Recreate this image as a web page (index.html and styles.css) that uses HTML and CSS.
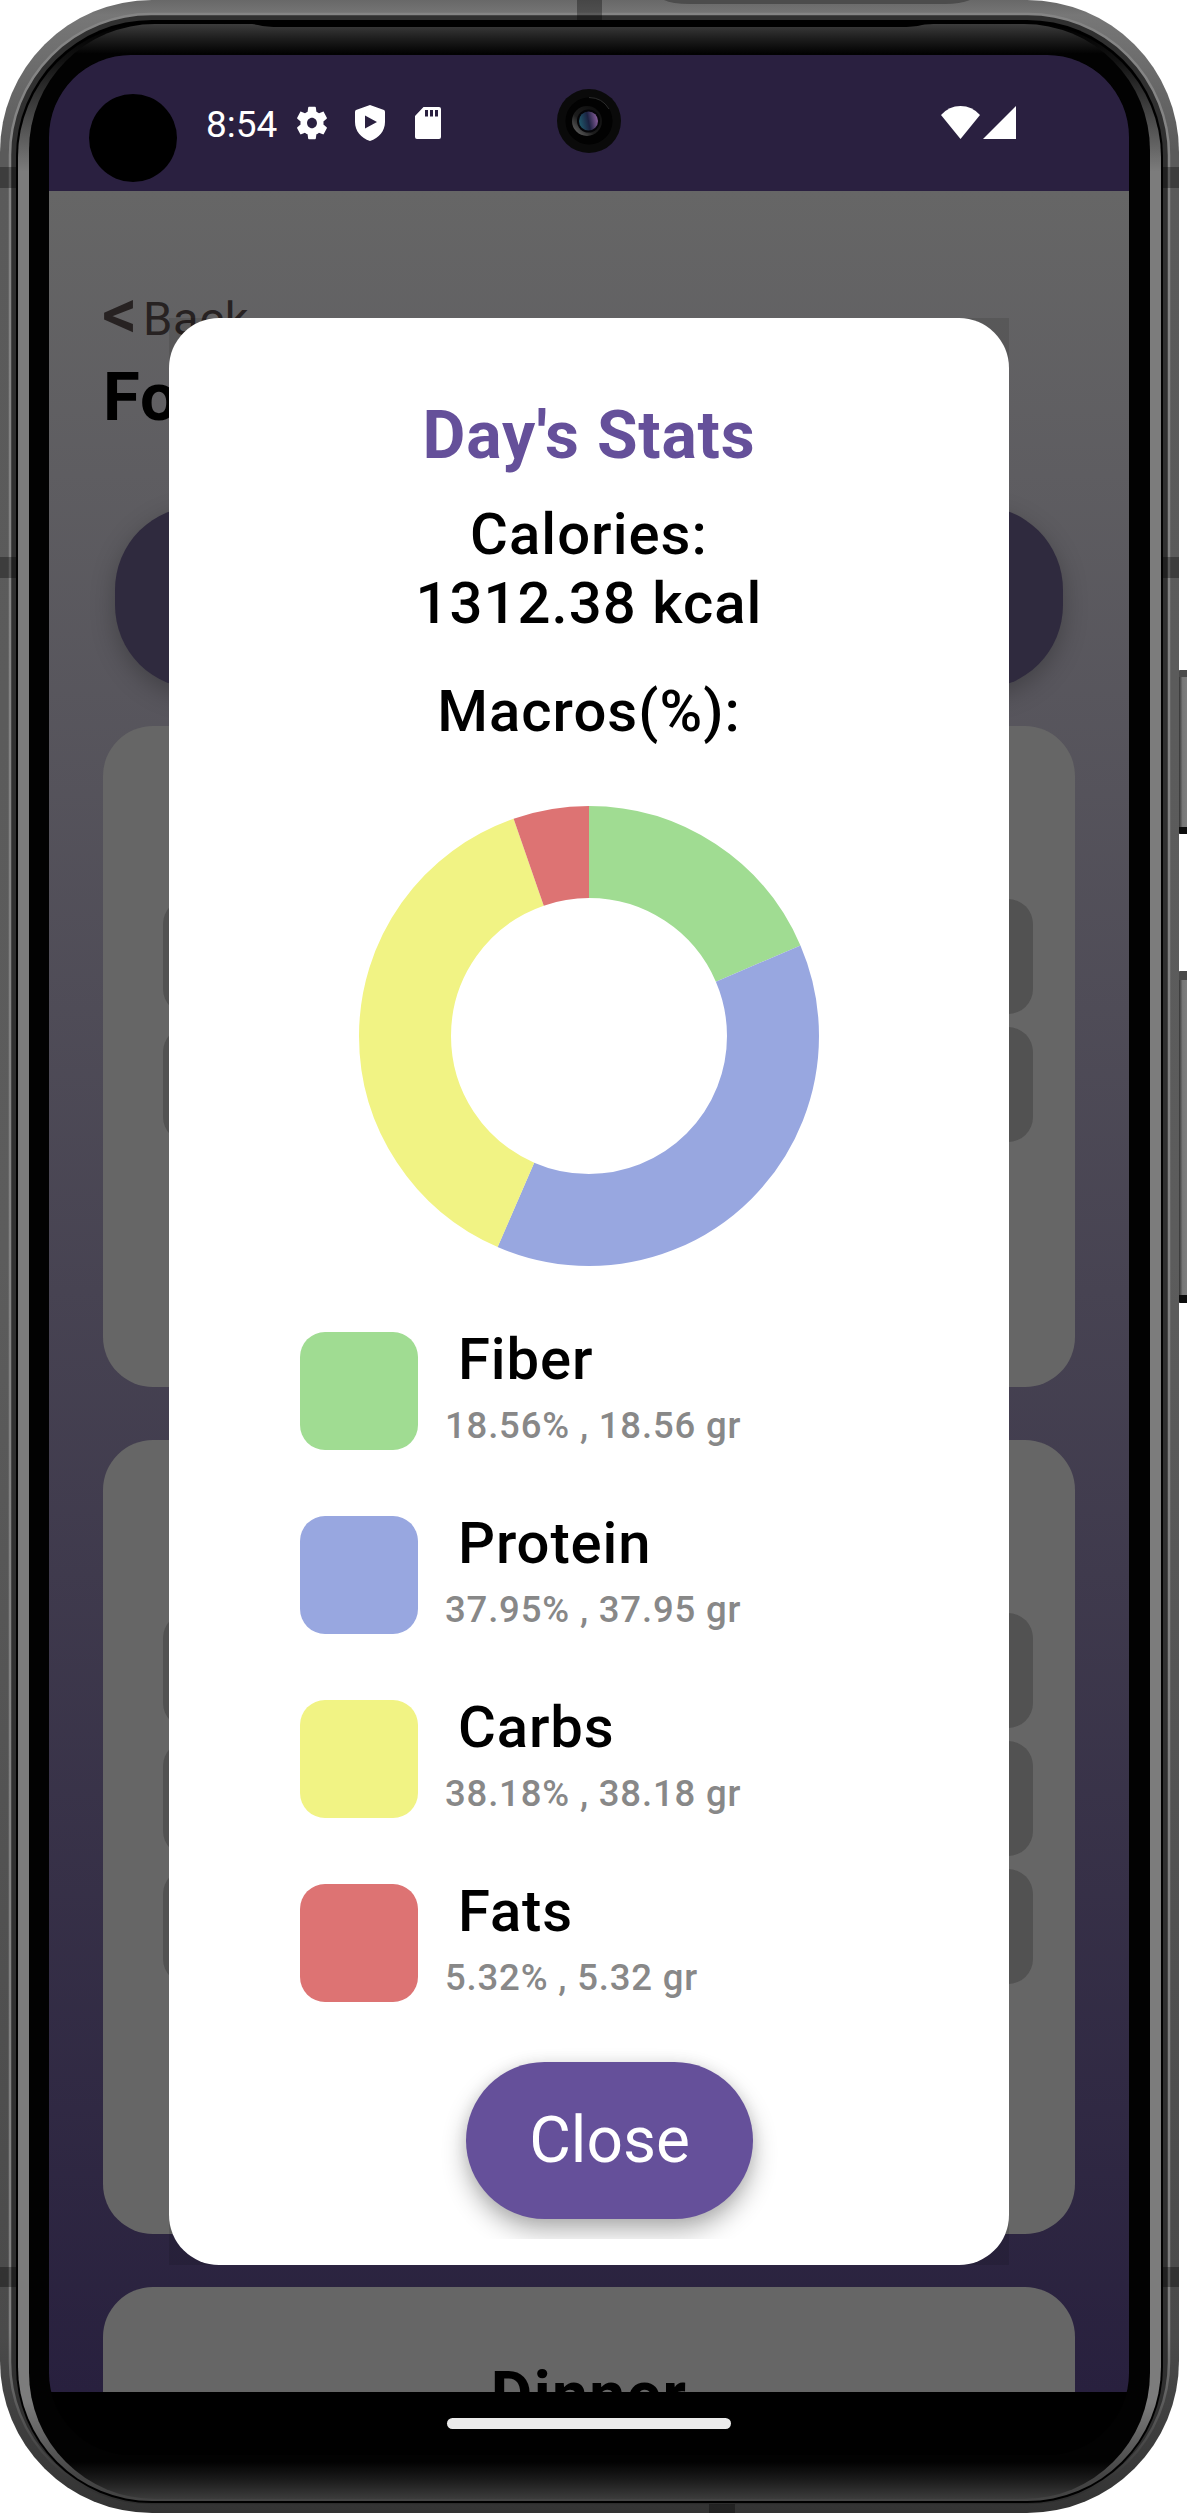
FILE: index.html
```html
<!DOCTYPE html>
<html lang="en">
<head>
<meta charset="utf-8">
<title>Day's Stats</title>
<link rel="stylesheet" href="styles.css">
</head>
<body>
<div class="device">
  <svg class="frame" width="1187" height="2513" viewBox="0 0 1187 2513" aria-hidden="true">
    <defs>
      <linearGradient id="rim" x1="0" y1="0" x2="0" y2="1">
        <stop offset="0" stop-color="#686868"/><stop offset=".006" stop-color="#777"/><stop offset=".06" stop-color="#5a5a5a"/><stop offset=".5" stop-color="#5c5c5c"/><stop offset=".93" stop-color="#4a4a4a"/><stop offset="1" stop-color="#333"/>
      </linearGradient>
      <linearGradient id="shine" x1="0" y1="0" x2="0" y2="1">
        <stop offset="0" stop-color="#858585"/><stop offset=".93" stop-color="#808080"/><stop offset="1" stop-color="#2c2c2c"/>
      </linearGradient>
      <linearGradient id="lip" x1="0" y1="0" x2="0" y2="1">
        <stop offset="0" stop-color="#000"/><stop offset=".015" stop-color="#111"/><stop offset=".06" stop-color="#7c7c7c"/><stop offset=".96" stop-color="#7c7c7c"/><stop offset=".99" stop-color="#444"/><stop offset="1" stop-color="#444"/>
      </linearGradient>
      <linearGradient id="glass" x1="0" y1="0" x2="0" y2="1">
        <stop offset="0" stop-color="#3c3c3c"/><stop offset=".006" stop-color="#1d1d1d"/><stop offset=".012" stop-color="#020202"/><stop offset=".985" stop-color="#020202"/><stop offset=".992" stop-color="#1a1a1a"/><stop offset="1" stop-color="#3c3c3c"/>
      </linearGradient>
      <linearGradient id="key" x1="0" y1="0" x2="1" y2="0">
        <stop offset="0" stop-color="#333"/><stop offset=".3" stop-color="#777"/><stop offset="1" stop-color="#848484"/>
      </linearGradient>
    </defs>
    <g>
      <rect x="1178" y="670" width="12" height="20" rx="2" fill="#4a4a4a"/>
      <rect x="1178" y="818" width="12" height="16" rx="2" fill="#0c0c0c"/>
      <rect x="1179" y="677" width="12" height="150" fill="url(#key)"/>
      <rect x="1178" y="971" width="12" height="20" rx="2" fill="#4a4a4a"/>
      <rect x="1178" y="1287" width="12" height="16" rx="2" fill="#0c0c0c"/>
      <rect x="1179" y="980" width="12" height="315" fill="url(#key)"/>
    </g>
    <rect x="0" y="0" width="1179" height="2513" rx="152" fill="url(#rim)"/>
    <rect x="10" y="14" width="1159" height="2489" rx="141" fill="#303030" stroke="url(#shine)" stroke-width="2.500"/>
    <rect x="16" y="20" width="1147" height="2483" rx="136" fill="#000"/>
    <rect x="18" y="23" width="1143" height="2478" rx="134" fill="url(#lip)"/>
    <rect x="29" y="24" width="1121" height="2475" rx="126" fill="url(#glass)"/>
    <path d="M160 21H1020L1000 23Q930 23 922 25T900 27H280Q266 27 258 25T240 23Z" fill="#000"/>
    <g fill="#000" fill-opacity=".32">
      <rect x="577" y="0" width="25" height="20"/>
      <rect x="0" y="167" width="16" height="21"/><rect x="1163" y="167" width="16" height="21"/>
      <rect x="0" y="557" width="16" height="21"/><rect x="1163" y="557" width="16" height="21"/>
      <rect x="0" y="2267" width="16" height="20"/><rect x="1163" y="2267" width="16" height="20"/>
      <rect x="709" y="2504" width="26" height="9"/>
    </g>
    <path d="M664 0H1025V0H970Q960 4 945 4H690Q672 4 664 0Z" fill="#4c4c4c"/>
  </svg>

  <main class="screen">
    <header class="status">
      <span class="clock">8:54</span>
      <svg class="gear" viewBox="2 2 20 20" preserveAspectRatio="none"><path fill="#fff" fill-rule="evenodd" d="M19.14 12.94c.04-.3.06-.61.06-.94 0-.32-.02-.64-.07-.94l2.03-1.58c.18-.14.23-.41.12-.61l-1.92-3.32c-.12-.22-.37-.29-.59-.22l-2.39.96c-.5-.38-1.03-.7-1.62-.94l-.36-2.54c-.04-.24-.24-.41-.48-.41h-3.84c-.24 0-.43.17-.47.41l-.36 2.54c-.59.24-1.13.57-1.62.94l-2.39-.96c-.22-.08-.47 0-.59.22L2.74 8.87c-.12.21-.08.47.12.61l2.03 1.58c-.05.3-.09.63-.09.94s.02.64.07.94l-2.03 1.58c-.18.14-.23.41-.12.61l1.92 3.32c.12.22.37.29.59.22l2.39-.96c.5.38 1.03.7 1.62.94l.36 2.54c.05.24.24.41.48.41h3.84c.24 0 .44-.17.47-.41l.36-2.54c.59-.24 1.13-.56 1.62-.94l2.39.96c.22.08.47 0 .59-.22l1.92-3.32c.12-.22.07-.47-.12-.61l-2.01-1.58zM12 15.100c-1.700 0-3.100-1.400-3.100-3.100s1.400-3.100 3.100-3.100 3.100 1.400 3.100 3.100-1.400 3.100-3.100 3.100z"/></svg>
      <svg class="shield" viewBox="0 0 30 36"><path fill="#fff" fill-rule="evenodd" d="M15 0L29 5Q30 5.500 30 7V17C30 26 24 33 15 36C6 33 0 26 0 17V7Q0 5.500 1 5ZM10 10.500V23.500L22 17Z"/></svg>
      <svg class="card-icon" viewBox="0 0 26 32"><path fill="#fff" fill-rule="evenodd" d="M8.500 0H24Q26 0 26 2V30Q26 32 24 32H2Q0 32 0 30V9ZM10 3V9.500H13V3ZM15 3V9.500H18V3ZM20 3V9.500H23V3Z"/></svg>
      <svg class="wifi" viewBox="0 0 39 33"><path fill="#fff" d="M0 9Q8 0 19.500 0T39 9L19.500 33Z"/></svg>
      <svg class="signal" viewBox="0 0 33 33"><path fill="#fff" d="M33 0V33H0Z"/></svg>
      <i class="cutout"></i>
      <svg class="lens" viewBox="0 0 64 64">
        <defs>
          <linearGradient id="ring" x1="0" y1="1" x2="1" y2="0"><stop offset="0" stop-color="#777"/><stop offset=".4" stop-color="#1c1c1c"/><stop offset="1" stop-color="#0a0a0a"/></linearGradient>
          <linearGradient id="iris" x1="0" y1=".6" x2="1" y2=".4"><stop offset="0" stop-color="#1f5a6c"/><stop offset=".5" stop-color="#1b2140"/><stop offset="1" stop-color="#8a5f9c"/></linearGradient>
        </defs>
        <circle cx="32" cy="32" r="32" fill="#0a0a0a"/>
        <circle cx="32" cy="32" r="23.500" fill="#020202"/>
        <path d="M32 8.500A23.500 23.500 0 0 1 52 20" fill="none" stroke="#2c2c2c"/>
        <circle cx="30" cy="32" r="15" fill="url(#ring)"/>
        <circle cx="31.500" cy="32" r="11.500" fill="#050508"/>
        <circle cx="31.500" cy="32" r="9.500" fill="url(#iris)"/>
      </svg>
    </header>

    <section class="page">
      <a class="back"><span class="chevron">&lt;</span>Back</a>
      <h1 class="heading">Food</h1>
      <div class="banner"></div>
      <div class="meal"><i></i><i></i></div>
      <div class="meal tall"><i></i><i></i><i></i></div>
      <div class="meal last"><h2>Dinner</h2></div>
    </section>

    <footer class="nav"><span></span></footer>
  </main>

  <section class="dialog-box">
  <div class="dialog">
    <h2 class="title">Day's Stats</h2>
    <p class="calories">Calories:<br>1312.38 kcal</p>
    <p class="macros">Macros(%):</p>
    <svg class="donut" viewBox="-230 -230 460 460">
      <g fill="none" stroke-width="92" transform="rotate(-90)">
        <circle r="184" pathLength="100" stroke="#a0dc92" stroke-dasharray="18.56 81.44"/>
        <circle r="184" pathLength="100" stroke="#98a7e0" stroke-dasharray="37.95 62.05" stroke-dashoffset="-18.56"/>
        <circle r="184" pathLength="100" stroke="#f1f384" stroke-dasharray="38.18 61.82" stroke-dashoffset="-56.5"/>
        <circle r="184" pathLength="100" stroke="#dd7373" stroke-dasharray="5.32 94.68" stroke-dashoffset="-94.68"/>
      </g>
    </svg>
    <ul class="legend">
      <li><i class="fiber"></i><div><b>Fiber</b><span>18.56% , 18.56 gr</span></div></li>
      <li><i class="protein"></i><div><b>Protein</b><span>37.95% , 37.95 gr</span></div></li>
      <li><i class="carbs"></i><div><b>Carbs</b><span>38.18% , 38.18 gr</span></div></li>
      <li><i class="fats"></i><div><b>Fats</b><span>5.32% , 5.32 gr</span></div></li>
    </ul>
    <div class="actions"><button class="close">Close</button></div>
  </div>
  </section>
</div>
</body>
</html>
```
FILE: styles.css
```css
* { box-sizing: border-box; margin: 0; padding: 0; }
body { background: #fff; font-family: Roboto, "Liberation Sans", sans-serif; color: #000; }
.device { position: relative; width: 1187px; height: 2513px; overflow: hidden; padding: 55px 58px 58px 49px; }
.frame { position: absolute; inset: 0; }
.screen { position: relative; width: 1080px; height: 2400px; border-radius: 82px; overflow: hidden; background: #000; display: flex; flex-direction: column; }

/* status bar */
.status { position: relative; height: 136px; flex: none; background: #2a2040; display: flex; align-items: flex-start; padding: 50px 113px 0 157px; }
.clock { color: #fff; font-size: 37px; line-height: 44px; width: 90px; margin-top: -2px; }
.gear { width: 32px; height: 34px; margin-top: 1px; }
.shield { width: 30px; height: 36px; margin-left: 27px; }
.card-icon { width: 26px; height: 32px; margin: 2px 0 0 30px; }
.wifi { width: 39px; height: 33px; margin: 1px 3px 0 auto; }
.signal { width: 33px; height: 33px; margin-top: 1px; }
.cutout { position: absolute; left: 40px; top: 39px; width: 88px; height: 88px; border-radius: 50%; background: #000; }
.lens { position: absolute; left: 508px; top: 34px; width: 64px; height: 64px; }

/* dimmed page */
.page { height: 2201px; flex: none; overflow: hidden; padding: 0 54px; background: linear-gradient(#666, #28203e); display: flex; flex-direction: column; }
.back { flex: none; height: 167px; padding-top: 101px; font-size: 47px; line-height: 54px; color: #272222; display: flex; letter-spacing: .8px; white-space: nowrap; }
.chevron { width: 41px; margin-left: -1px; font-size: 70px; font-weight: 500; line-height: 44px; }
.heading { flex: none; font-size: 67px; line-height: 78px; height: 148px; letter-spacing: 1px; }
.banner { height: 183px; margin: 0 12px 37px; border-radius: 84px; background: #2f2a3e; box-shadow: 0 8px 24px rgba(0,0,0,.25); flex: none; }
.meal { flex: none; height: 661px; margin-bottom: 53px; border-radius: 50px; background: #666; padding: 173px 42px 0 60px; display: flex; flex-direction: column; gap: 13px; }
.meal i { height: 115px; flex: none; border-radius: 25px; background: #525252; }
.meal.tall { height: 794px; }
.meal.last { padding: 72px 0 0; height: 400px; }
.meal h2 { font-size: 64px; line-height: 74px; text-align: center; letter-spacing: 1.4px; }

.nav { flex: 1; display: flex; justify-content: center; padding: 26px 0 0; }
.nav span { width: 284px; height: 11px; border-radius: 6px; background: #eaeaea; }

/* stats dialog */
.dialog-box { position: absolute; left: 169px; top: 318px; width: 840px; height: 1947px; background: rgba(0,0,0,.1); }
.dialog { height: 100%; border-radius: 50px; background: #fff; display: flex; flex-direction: column; align-items: center; padding-top: 79px; }
.title { font-size: 66px; line-height: 78px; color: #65509a; letter-spacing: .8px; height: 103px; }
.calories, .macros { font-size: 58px; font-weight: 500; line-height: 69px; letter-spacing: 1.050px; text-align: center; }
.calories { margin-bottom: 39px; }
.donut { width: 460px; height: 460px; margin: 60px 0 66px; flex: none; }
.legend { list-style: none; align-self: flex-start; padding-left: 131px; display: flex; flex-direction: column; gap: 66px; }
.legend li { display: flex; height: 118px; }
.legend i { width: 118px; height: 118px; border-radius: 25px; margin-right: 27px; }
.legend b { display: block; font-size: 58px; font-weight: 500; line-height: 69px; letter-spacing: .9px; padding-left: 13px; margin-top: -7px; }
.legend span { display: block; font-size: 36.500px; font-weight: 500; line-height: 44px; letter-spacing: .83px; color: #888; margin-top: 10px; white-space: nowrap; }
.fiber { background: #a0dc92; }
.protein { background: #98a7e0; }
.carbs { background: #f1f384; }
.fats { background: #dd7373; }
.actions { align-self: stretch; height: 201px; margin-top: 36px; padding: 24px 0 0 297px; overflow: hidden; flex: none; }
.close { display: block; width: 287px; height: 157px; border: 0; border-radius: 79px; background: #65509a; color: #fff; font: 400 64px/157px Roboto, sans-serif; letter-spacing: 0; box-shadow: 0 12px 24px rgba(0,0,0,.3), 0 0 14px rgba(0,0,0,.08); }
```
